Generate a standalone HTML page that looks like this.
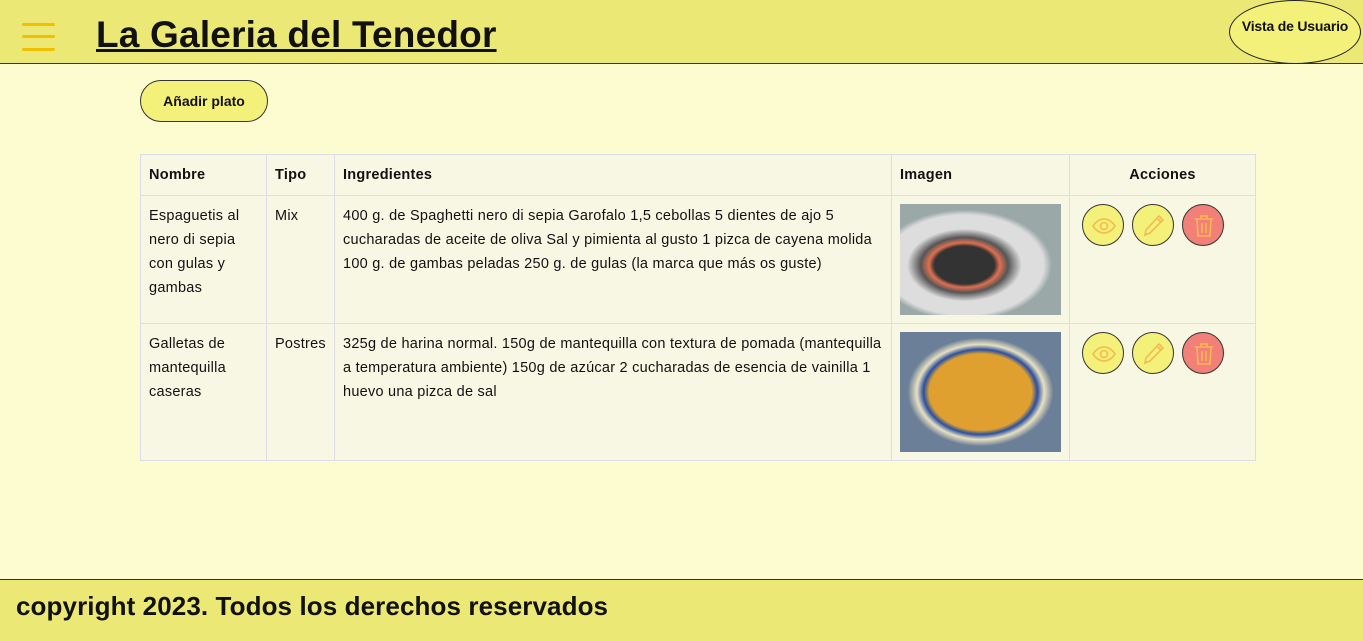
<!DOCTYPE html>
<html><head><meta charset="utf-8"><style>
*{box-sizing:border-box;margin:0;padding:0}
body{width:1363px;height:641px;background:#fdfbd0;font-family:"Liberation Sans",sans-serif;position:relative;overflow:hidden;color:#111}
header{position:absolute;left:0;top:0;width:1363px;height:64px;background:#ebe875;border-bottom:1px solid #333}
.ham{position:absolute;left:22px;width:33px;height:3px;background:#f0c000;border-radius:2px}
h1{position:absolute;left:96px;top:12px;font-size:37px;font-weight:bold;text-decoration:underline;text-decoration-thickness:3px;letter-spacing:0.2px;line-height:46px}
.vu{position:absolute;left:1229px;top:0;width:132px;height:64px;border:1px solid #222;border-radius:50%;background:#f4f17a;font-weight:bold;font-size:14px;text-align:center;line-height:50px;letter-spacing:-0.2px}
.add{position:absolute;left:140px;top:80px;width:128px;height:42px;border:1px solid #333;border-radius:21px;background:#f4f17a;font-weight:bold;font-size:14px;text-align:center;line-height:40px}
table{position:absolute;left:140px;top:154px;width:1116px;border-collapse:collapse;background:#f8f7e4;font-size:14.5px;letter-spacing:0.25px}
td,th{border:1px solid #dcdde8;vertical-align:top;text-align:left;padding:8px 8px;line-height:24px}
th{height:41px;font-weight:bold;padding:6px 8px;vertical-align:middle}
.img{width:161px;height:111px;display:block}
.b{display:inline-block;width:42px;height:42px;border:1px solid #333;border-radius:50%;background:#f4f17a;margin-right:8px;vertical-align:top;position:relative}
.b svg{position:absolute;left:9px;top:9px}
footer{position:absolute;left:0;top:579px;width:1363px;height:62px;background:#ebe875;border-top:1px solid #333;font-weight:bold;font-size:26px;padding:11px 16px;letter-spacing:0.1px}
</style></head><body>
<header>
<div class="ham" style="top:23px"></div><div class="ham" style="top:35px"></div><div class="ham" style="top:48px"></div>
<h1>La Galeria del Tenedor</h1>
<div class="vu">Vista de Usuario</div>
</header>
<div class="add">Añadir plato</div>
<table>
<tr><th style="width:126px">Nombre</th><th style="width:68px">Tipo</th><th style="width:557px">Ingredientes</th><th style="width:178px">Imagen</th><th style="text-align:center">Acciones</th></tr>
<tr style="height:128px"><td>Espaguetis al nero di sepia con gulas y gambas</td><td>Mix</td><td>400 g. de Spaghetti nero di sepia Garofalo 1,5 cebollas 5 dientes de ajo 5 cucharadas de aceite de oliva Sal y pimienta al gusto 1 pizca de cayena molida 100 g. de gambas peladas 250 g. de gulas (la marca que más os guste)</td>
<td><div class="img" style="background:radial-gradient(ellipse at 40% 55%,#333 0 22%,#e07050 26%,#555 32%,#ddd 42% 58%,#9aa8a8 64%),#ccc"></div></td><td>ICONS</td></tr>
<tr style="height:137px"><td>Galletas de mantequilla caseras</td><td>Postres</td><td>325g de harina normal. 150g de mantequilla con textura de pomada (mantequilla a temperatura ambiente) 150g de azúcar 2 cucharadas de esencia de vainilla 1 huevo una pizca de sal</td>
<td><div class="img" style="height:120px;background:radial-gradient(ellipse at 50% 50%,#e0a030 0 45%,#2a4fa0 50%,#e8e0c0 56%,#6b7f98 64%)"></div></td><td>ICONS</td></tr>
</table>
<footer>copyright 2023. Todos los derechos reservados</footer>
<script>
var ic='<span class="b"><svg width="24" height="24" viewBox="0 0 24 24" fill="none" stroke="#f5b850" stroke-width="1.6"><path d="M1 12s4-7 11-7 11 7 11 7-4 7-11 7S1 12 1 12z"/><circle cx="12" cy="12" r="3.5"/></svg></span><span class="b"><svg width="24" height="24" viewBox="0 0 24 24" fill="none" stroke="#f5b850" stroke-width="1.6"><path d="M17 2l4 4L8 19l-5 2 1-5z M15 4l4 4"/></svg></span><span class="b" style="background:#f28078"><svg width="24" height="24" viewBox="0 0 24 24" fill="none" stroke="#f5b850" stroke-width="1.6"><path d="M3 5h18M9 5V2h6v3M5 5l1 17h12l1-17M10 9v10M14 9v10"/></svg></span>';
document.querySelectorAll('td').forEach(function(t){if(t.textContent=='ICONS'){t.innerHTML=ic;t.style.paddingLeft='12px';t.style.letterSpacing='0'}});
</script>
</body></html>
